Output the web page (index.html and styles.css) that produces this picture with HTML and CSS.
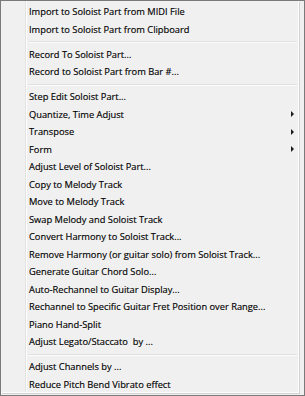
FILE: index.html
```html
<!DOCTYPE html>
<html>
<head>
<meta charset="utf-8">
<link rel="stylesheet" href="styles.css">
</head>
<body>
<div class="frame">
  <ul class="menu">
    <li class="item"><span class="label">Import to Soloist Part from MIDI File</span></li>
    <li class="item"><span class="label">Import to Soloist Part from Clipboard</span></li>
    <li class="sep"></li>
    <li class="item"><span class="label">Record To Soloist Part...</span></li>
    <li class="item"><span class="label">Record to Soloist Part from Bar #...</span></li>
    <li class="sep"></li>
    <li class="item"><span class="label">Step Edit Soloist Part...</span></li>
    <li class="item sub"><span class="label">Quantize, Time Adjust</span><span class="arrow"></span></li>
    <li class="item sub"><span class="label">Transpose</span><span class="arrow"></span></li>
    <li class="item sub"><span class="label">Form</span><span class="arrow"></span></li>
    <li class="item"><span class="label">Adjust Level of Soloist Part...</span></li>
    <li class="item"><span class="label">Copy to Melody Track</span></li>
    <li class="item"><span class="label">Move to Melody Track</span></li>
    <li class="item"><span class="label">Swap Melody and Soloist Track</span></li>
    <li class="item"><span class="label">Convert Harmony to Soloist Track...</span></li>
    <li class="item"><span class="label">Remove Harmony (or guitar solo) from Soloist Track...</span></li>
    <li class="item"><span class="label">Generate Guitar Chord Solo...</span></li>
    <li class="item"><span class="label">Auto-Rechannel to Guitar Display...</span></li>
    <li class="item"><span class="label">Rechannel to Specific Guitar Fret Position over Range...</span></li>
    <li class="item"><span class="label">Piano Hand-Split</span></li>
    <li class="item"><span class="label">Adjust Legato/Staccato&nbsp; by ...</span></li>
    <li class="sep"></li>
    <li class="item"><span class="label">Adjust Channels by ...</span></li>
    <li class="item"><span class="label">Reduce Pitch Bend Vibrato effect</span></li>
  </ul>
</div>
</body>
</html>
```

FILE: styles.css
```css
html, body {
  margin: 0;
  padding: 0;
  background: #ffffff;
}

.frame {
  box-sizing: border-box;
  width: 305px;
  height: 396px;
  border: 1px solid #7a7a7a;
  background: #f0f0f0;
  padding: 0 5px 2px 0;
}

.menu {
  list-style: none;
  margin: 0;
  padding: 2px 0 0 0;
  box-sizing: border-box;
  height: 100%;
  border-right: 1px solid #fdfdfd;
  border-bottom: 1px solid #fdfdfd;
  box-shadow: 1px 1px 0 #d2d2d2;
  background: linear-gradient(to right,
    transparent 24px, #e3e3e3 24px, #e3e3e3 25px,
    #fcfcfc 25px, #fcfcfc 26px, transparent 26px) , #f0f0f0;
  font-family: "Open Sans", "Noto Sans", sans-serif;
  font-size: 9.3px;
  color: #000000;
}

.item {
  display: flex;
  align-items: center;
  height: 17.5px;
  padding: 0 4px 0 28px;
  white-space: nowrap;
}

.label {
  flex: 1;
  line-height: 17.5px;
  -webkit-text-stroke: 0.15px #000000;
}

.arrow {
  width: 0;
  height: 0;
  border-top: 3px solid transparent;
  border-bottom: 3px solid transparent;
  border-left: 3.5px solid #1a1a1a;
  margin-right: 0;
}

.sep {
  height: 1px;
  margin: 3px 1px 2.5px 28px;
  border-top: 1px solid #e0e0e0;
  background: #fcfcfc;
  box-sizing: content-box;
}
```
